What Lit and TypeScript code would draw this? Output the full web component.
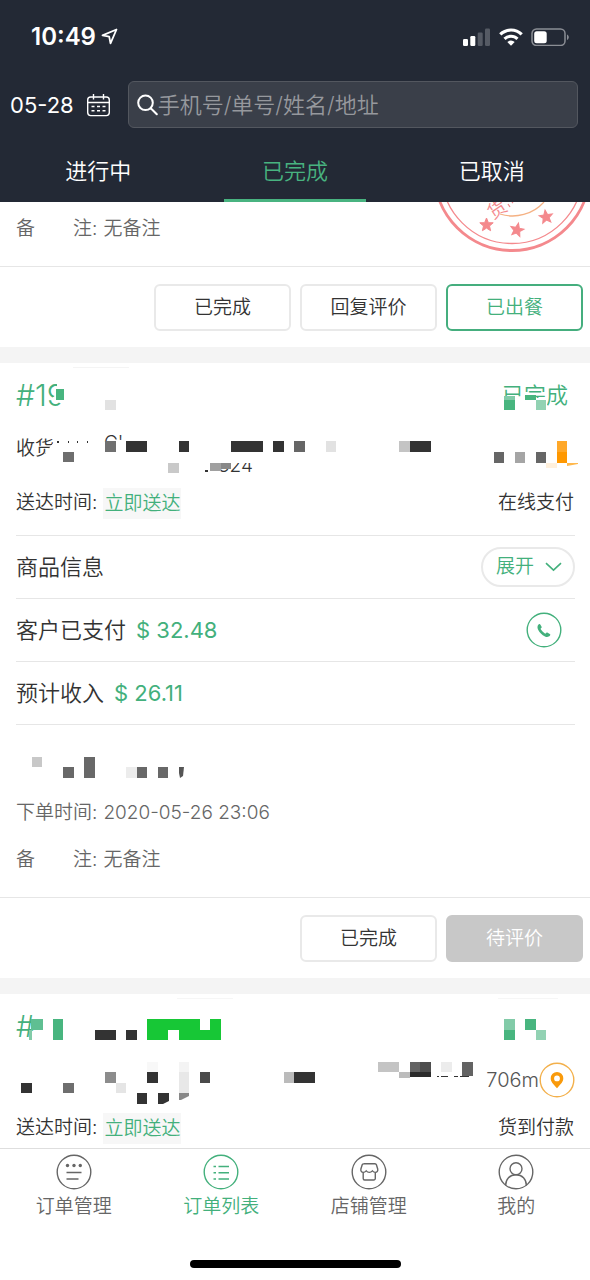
import { LitElement, html, svg, css, nothing, type TemplateResult } from "lit";
import { customElement, state } from "lit/decorators.js";
import { classMap } from "lit/directives/class-map.js";

type Block = [x: number, y: number, w: number, h: number, fill: string];

const blocks = (list: Block[]) =>
  list.map(([x, y, w, h, fill]) => svg`<rect x=${x} y=${y} width=${w} height=${h} fill=${fill} />`);

const INK = "#333333";
const GREEN = "#48b57f";

/* Redaction blocks, in the coordinates of the order card they cover. */
const FIRST_LEFT: Block[] = [
  [73, 4, 56, 1, "#f4f4f4"],
  [56, 26, 8, 11, GREEN],
  [105, 37, 11, 10, "#e2e2e2"],
  [63, 89, 11, 10, "#6e6e6e"],
  [57, 78, 2, 2, INK],
  [68, 78, 1, 2, INK],
  [77, 78, 1, 2, INK],
  [87, 78, 1, 2, INK],
  [105, 78, 11, 11, "#707070"],
  [126, 78, 21, 11, INK],
  [179, 78, 10, 11, INK],
  [231, 78, 32, 11, INK],
  [273, 78, 11, 11, INK],
  [294, 78, 11, 11, "#666666"],
  [326, 78, 10, 11, "#e2e2e2"],
  [399, 78, 11, 11, "#c4c4c4"],
  [410, 78, 21, 11, INK],
  [168, 100, 11, 10, "#c9c9c9"],
  [210, 100, 11, 8, "#a0a0a0"],
  [221, 100, 10, 6, "#888888"],
];
const FIRST_RIGHT: Block[] = [
  [4, 33, 11, 4, "#82cba8"],
  [4, 37, 11, 10, GREEN],
  [25, 32, 11, 5, GREEN],
  [36, 37, 10, 10, "#92d2b3"],
  [-6, 89, 10, 11, "#666666"],
  [15, 89, 10, 11, "#a5a5a5"],
  [36, 89, 10, 11, "#666666"],
  [46, 100, 11, 5, "#fff0dc"],
  [57, 78, 10, 11, "#ffa829"],
  [57, 89, 10, 11, "#ff9800"],
];
const SENDER: Block[] = [
  [32, 0, 10, 10, "#c8c8c8"],
  [63, 10, 11, 11, "#686868"],
  [84, 0, 11, 21, "#686868"],
  [126, 10, 11, 11, "#ececec"],
  [137, 10, 10, 11, "#686868"],
  [158, 10, 10, 11, "#686868"],
];
const SECOND_LEFT: Block[] = [
  [177, 4, 56, 1, "#f6f6f6"],
  [31, 25, 12, 11, "#5fbf92"],
  [29, 36, 3, 10, "#82cba8"],
  [53, 25, 10, 21, GREEN],
  [95, 36, 21, 10, INK],
  [126, 36, 11, 10, INK],
  [21, 89, 11, 10, INK],
  [63, 89, 11, 10, "#6e6e6e"],
  [105, 78, 11, 11, "#8c8c8c"],
  [116, 89, 10, 10, "#e5e5e5"],
  [147, 68, 11, 10, "#f8f8f8"],
  [147, 78, 11, 11, INK],
  [137, 99, 10, 11, INK],
  [179, 68, 10, 10, "#f4f4f4"],
  [179, 78, 10, 21, "#e8e8e8"],
  [200, 78, 10, 11, "#4a4a4a"],
  [284, 78, 10, 11, "#bbbbbb"],
  [294, 78, 21, 11, INK],
  [378, 68, 21, 10, "#c4c4c4"],
  [399, 78, 11, 6, "#bcbcbc"],
  [410, 68, 10, 10, "#636363"],
  [420, 68, 11, 10, "#4d4d4d"],
  [410, 78, 21, 5, "#2b2b2b"],
  [437, 82, 2, 1, INK],
  [441, 82, 7, 1, INK],
  [454, 82, 4, 1, INK],
  [460, 82, 9, 1, INK],
  [441, 68, 11, 10, "#ececec"],
  [462, 68, 11, 14, "#636363"],
];
const SECOND_RIGHT: Block[] = [
  [-2, 4, 60, 1, "#f6f6f6"],
  [4, 25, 11, 11, "#82cba8"],
  [4, 36, 11, 10, GREEN],
  [25, 25, 11, 11, GREEN],
  [36, 36, 10, 10, "#92d2b3"],
];

const star = (x: number, y: number, turn: number) => svg`
  <polygon transform="translate(${x} ${y}) rotate(${turn})" fill="#f4898d"
    points="0,-7 1.9,-2.3 6.7,-2.2 3,1 4.1,5.7 0,3.1 -4.1,5.7 -3,1 -6.7,-2.2 -1.9,-2.3" />`;

const navIcons: Record<string, TemplateResult> = {
  manage: svg`
    <g fill="currentColor" stroke="none">
      <circle cx="11.5" cy="11.5" r="1.7" /><circle cx="18" cy="11.5" r="1.7" /><circle cx="24.3" cy="11.5" r="1.7" />
    </g>
    <path d="M10.500 18.500h15M10.500 25h12" />`,
  list: svg`
    <path d="M10.500 12.500h2.500M15.500 12.500h10.500M10.500 18.800h2.500M15.500 18.800h10.500M10.500 25h2.500M15.500 25h10.500" />`,
  shop: svg`
    <path d="M12.500 9.800h11.500a1.500 1.500 0 0 1 1.400 1l1.300 4.200c.4 2-.6 3.400-2.300 3.400-1.200 0-2.200-.6-3-1.500-.8.900-1.900 1.500-3.100 1.500s-2.300-.6-3.100-1.500c-.8.9-1.800 1.500-3 1.500-1.700 0-2.700-1.400-2.300-3.400l1.300-4.200a1.500 1.500 0 0 1 1.400-1z" />
    <path d="M12.200 18.400v6.100a1.500 1.500 0 0 0 1.500 1.500h9.100a1.500 1.500 0 0 0 1.500-1.500v-6.100" />`,
  me: svg`
    <circle cx="18" cy="14.800" r="6" />
    <path d="M7.600 31.500c0-6.500 4.200-10.700 10.400-10.700s10.400 4.200 10.400 10.700" />`,
};

@customElement("order-card")
class OrderCard extends LitElement {
  static styles = css`
    :host {
      display: block;
      position: relative;
      background: #fff;
      border-bottom: 16px solid #f4f4f4;
    }
  `;

  render() {
    return html`<slot></slot>`;
  }
}

@customElement("app-root")
class AppRoot extends LitElement {
  @state() private tab = "已完成";
  @state() private page = "list";

  static styles = css`
    :host {
      display: flex;
      flex-direction: column;
      height: 100vh;
      overflow: hidden;
      background: #fff;
      color: #333;
      font-family: Inter, "Noto Sans CJK SC", sans-serif;
      font-size: 19px;
      font-weight: 350;
      line-height: 28px;
    }
    * {
      box-sizing: border-box;
    }
    button,
    input {
      font: inherit;
      color: inherit;
      margin: 0;
      padding: 0;
      border: 0;
      background: none;
    }
    svg {
      display: block;
      flex: none;
    }
    .top {
      flex: none;
      background: #232935;
      color: #fff;
    }
    .status-bar {
      display: flex;
      align-items: center;
      justify-content: space-between;
      height: 73px;
      padding: 0 20px 0 31px;
    }
    .clock {
      display: flex;
      align-items: center;
      gap: 5px;
      font-size: 24px;
      font-weight: 600;
    }
    .signals {
      display: flex;
      align-items: center;
      gap: 8px;
    }
    .search-row {
      display: flex;
      align-items: center;
      gap: 17px;
      padding: 8px 12px 12px 10px;
      font-size: 22px;
    }
    .date {
      display: flex;
      align-items: center;
      gap: 12px;
      font-weight: 400;
    }
    .search {
      display: flex;
      align-items: center;
      flex: 1;
      min-width: 0;
      height: 47px;
      padding: 0 8px;
      border: 1px solid #53575f;
      border-radius: 6px;
      background: #3a3f49;
    }
    .search input {
      flex: 1;
      min-width: 0;
      height: 40px;
      outline: 0;
    }
    .search input::placeholder {
      color: #96989d;
      opacity: 1;
    }
    .tabs {
      display: grid;
      grid-template-columns: repeat(3, 1fr);
      font-size: 22px;
    }
    .tab {
      display: flex;
      flex-direction: column;
      align-items: center;
      height: 62px;
      line-height: 62px;
    }
    .tab::after {
      content: "";
      width: 72%;
      height: 3px;
      margin-top: -3px;
    }
    .tab.on {
      color: #48b380;
    }
    .tab.on::after {
      background: #48b380;
    }
    .orders {
      flex: 1;
      min-height: 0;
      overflow: hidden auto;
      scrollbar-width: none;
    }
    .over {
      position: absolute;
      top: 0;
      pointer-events: none;
      overflow: visible;
    }
    .over.left {
      left: 0;
    }
    .over.right {
      right: 0;
    }
    .title,
    .person,
    .when,
    .line {
      display: flex;
      align-items: center;
      justify-content: space-between;
    }
    .title {
      height: 64px;
      padding: 0 22px 0 16px;
      color: #43b07c;
      font-size: 22px;
    }
    .number {
      font-size: 30px;
    }
    .person {
      height: 44px;
      margin-bottom: 16px;
      padding: 0 15px 0 16px;
    }
    .person.near {
      justify-content: flex-end;
      margin-bottom: 10px;
    }
    .distance {
      font-size: 20px;
      color: #555;
    }
    .when {
      height: 48px;
      padding: 0 16px 16px;
    }
    .field {
      display: flex;
      align-items: center;
      gap: 6px;
      white-space: pre;
    }
    .soon {
      display: block;
      padding: 0 1px;
      line-height: 31px;
      background: #f7f7f7;
      color: #43b07c;
    }
    .lines {
      margin: 0 15px 0 16px;
    }
    .line {
      height: 63px;
      border-top: 1px solid #e6e6e6;
      font-size: 22px;
    }
    .line:last-child {
      height: 64px;
      border-bottom: 1px solid #e6e6e6;
    }
    .amount {
      display: flex;
      align-items: baseline;
      gap: 10px;
    }
    .price {
      color: #43b07c;
      font-weight: 400;
    }
    .expand {
      display: flex;
      align-items: center;
      gap: 11px;
      height: 40px;
      padding: 0 11px 0 13px;
      border: 2px solid #e9e9e9;
      border-radius: 20px;
      color: #43b07c;
      font-size: 19px;
    }
    .call {
      margin-right: 13px;
      color: #43b07c;
    }
    .details {
      padding: 17px 16px 14px;
      color: #666;
      line-height: 47px;
    }
    .details.tail {
      padding-top: 3px;
    }
    .sender {
      height: 47px;
      margin-left: -16px;
      padding-top: 15px;
    }
    .actions {
      display: flex;
      justify-content: flex-end;
      gap: 9px;
      padding: 17px 7px 16px;
      border-top: 1px solid #e6e6e6;
    }
    .action {
      width: 137px;
      height: 47px;
      border: 2px solid #e9e9e9;
      border-radius: 6px;
    }
    .action.primary {
      border-color: #45ae7e;
      color: #43b07c;
    }
    .action.idle {
      border-color: #c8c8c8;
      background: #c8c8c8;
      color: #fff;
    }
    .bottom {
      flex: none;
      background: #fff;
      border-top: 1px solid #dedede;
    }
    .nav {
      display: grid;
      grid-template-columns: repeat(4, 1fr);
      padding-top: 5px;
    }
    .nav a {
      display: flex;
      flex-direction: column;
      align-items: center;
      color: #666;
      line-height: 34px;
      text-decoration: none;
    }
    .nav a.on {
      color: #43b07c;
    }
    .home {
      width: 211px;
      height: 8px;
      margin: 36px auto 12px;
      border-radius: 4px;
      background: #000;
    }
  `;

  private field(label: string, value: string | TemplateResult) {
    return html`<div class="field"><span>${label}:</span><span>${value}</span></div>`;
  }

  private header() {
    return html`
      <header class="top">
        <div class="status-bar">
          <div class="clock">
            <span>10:49</span>
            <svg width="17" height="17" viewBox="0 0 17 17" fill="none" stroke="#fff" stroke-width="1.8" stroke-linejoin="round">
              <path d="M15.500 1.500 1.500 7.300l6.700 1.300 1.300 6.700z" />
            </svg>
          </div>
          <div class="signals">
            <svg width="28" height="18" viewBox="0 0 28 18">
              <rect x="0" y="11" width="5" height="7" rx="1.2" fill="#fff" />
              <rect x="7.300" y="8" width="5" height="10" rx="1.2" fill="#fff" />
              <rect x="14.700" y="4.500" width="5" height="13.500" rx="1.2" fill="#555a64" />
              <rect x="22" y="0.500" width="5" height="17.500" rx="1.2" fill="#555a64" />
            </svg>
            <svg width="24" height="18" viewBox="0 0 24 18" fill="none" stroke="#fff" stroke-width="3.2">
              <path d="M1.300 6.400a15.200 15.200 0 0 1 21.400 0" />
              <path d="M5.500 10.900a9.200 9.200 0 0 1 13 0" stroke-width="3" />
              <path d="M12 17.800 8.300 14.100a5.200 5.200 0 0 1 7.400 0z" fill="#fff" stroke="none" />
            </svg>
            <svg width="39" height="18" viewBox="0 0 39 18">
              <rect x="1" y="1" width="33" height="16.500" rx="4.500" fill="none" stroke="#8b8e95" stroke-width="1.5" />
              <rect x="3.200" y="3.200" width="12.500" height="12" rx="2.500" fill="#fff" />
              <path d="M36 6.500c2.400 1 2.400 4.500 0 5.500z" fill="#8b8e95" />
            </svg>
          </div>
        </div>
        <div class="search-row">
          <button class="date">
            05-28
            <svg width="25" height="24" viewBox="0 0 25 24" fill="none" stroke="#fff" stroke-width="1.4">
              <rect x="1.700" y="4" width="21.600" height="18.600" rx="3" />
              <path d="M1.700 9.500h21.600M7.500 1v5.500M17.500 1v5.500" />
              <path d="M5.500 13.500h3M11 13.500h3M16.500 13.500h3M5.500 17.800h3M11 17.800h3M16.500 17.800h3" stroke-width="1.6" />
            </svg>
          </button>
          <label class="search">
            <svg width="21" height="22" viewBox="0 0 21 22" fill="none" stroke="#fff" stroke-width="2" stroke-linecap="round">
              <circle cx="8.500" cy="8.800" r="7.300" />
              <path d="m14 14.500 5.800 5.800" />
            </svg>
            <input type="search" aria-label="搜索" placeholder="手机号/单号/姓名/地址" />
          </label>
        </div>
        <div class="tabs">
          ${["进行中", "已完成", "已取消"].map(
            (name) => html`<button class=${classMap({ tab: true, on: name === this.tab })}
              @click=${() => (this.tab = name)}>${name}</button>`
          )}
        </div>
      </header>`;
  }

  private previousOrder() {
    return html`
      <order-card>
        <div class="details tail">${this.field("备\u3000\u3000注", "无备注")}</div>
        <svg class="over right" width="160" height="52" viewBox="0 0 160 52" fill="none" stroke="#f4898d">
          <circle cx="82" cy="-29" r="77.500" stroke-width="3" />
          <circle cx="82" cy="-29" r="70.500" stroke-width="1.3" />
          <path d="M70 12a42 42 0 0 0 44 -12" stroke="#f5b183" stroke-width="1.3" />
          <path d="m78 2 2 3M82 0l1 1" stroke-width="1.3" />
          ${star(56.5, 23, 0)}${star(87, 28, 12)}${star(116, 15, -8)}
          <text transform="translate(63 18) rotate(-34)" font-size="19" fill="#f4898d" stroke="none">货</text>
        </svg>
        <div class="actions">
          <button class="action">已完成</button>
          <button class="action">回复评价</button>
          <button class="action primary">已出餐</button>
        </div>
      </order-card>`;
  }

  private firstOrder() {
    return html`
      <order-card>
        <div class="title"><span class="number">#19</span><span>已完成</span></div>
        <div class="person"><span>收货</span></div>
        <svg class="over left" width="480" height="124" viewBox="0 0 480 124">
          <polygon points="57,14 74,14 74,48 62,41 51,36 57,31" fill="#fff" />
          <polygon points="55,78 55,100 43,100 45,91 50,84" fill="#fff" />
          <text x="104" y="86" font-size="19" fill=${INK}>C'</text>
          <rect x="104" y="79" width="30" height="12" fill="#fff" />
          <text x="218" y="109" font-size="19" fill=${INK}>324</text>
          <rect x="216" y="90" width="40" height="10" fill="#fff" />
          <rect x="205" y="107" width="3" height="2" fill=${INK} />
          ${blocks(FIRST_LEFT)}
        </svg>
        <svg class="over right" width="90" height="124" viewBox="0 0 90 124">
          <rect x="0" y="35" width="47" height="12" fill="#fff" />
          ${blocks(FIRST_RIGHT)}
          <path d="M67 100h11v1l-11 2z" fill="#ffb84d" />
        </svg>
        <div class="when">
          ${this.field("送达时间", html`<span class="soon">立即送达</span>`)}
          <span>在线支付</span>
        </div>
        <div class="lines">
          <div class="line">
            <span>商品信息</span>
            <button class="expand">
              展开
              <svg width="17" height="10" viewBox="0 0 17 10" fill="none" stroke="currentColor" stroke-width="1.6">
                <path d="m1 1.200 7.500 7 7.500-7" />
              </svg>
            </button>
          </div>
          <div class="line">
            <span class="amount">客户已支付 <span class="price">$ 32.48</span></span>
            <button class="call" aria-label="拨打电话">
              <svg width="36" height="36" viewBox="0 0 36 36">
                <circle cx="18" cy="18" r="16.800" fill="none" stroke="currentColor" stroke-width="1.4" />
                <path fill="currentColor" d="M12.800 12.300c.6-.5 1.200-.4 1.500.2l1.300 2.200c.3.600.1 1-.4 1.300-.6.500-.7.900-.3 1.600 1 1.500 2.200 2.800 3.700 3.700.700.500 1.200.400 1.600-.2.400-.6.900-.6 1.500-.3l2.100 1.300c.6.400.7.900.2 1.500-1.300 1.600-3.200 1.800-5 .900-3.100-1.500-5.500-3.900-7-7-.9-1.900-.7-3.900.8-5.200z" />
              </svg>
            </button>
          </div>
          <div class="line">
            <span class="amount">预计收入 <span class="price">$ 26.11</span></span>
          </div>
        </div>
        <div class="details">
          <div class="sender">
            <svg width="200" height="21" viewBox="0 0 200 21">
              ${blocks(SENDER)}
              <path d="M179 10h5l-1 9-3 2-1-5z" fill="#555" />
            </svg>
          </div>
          ${this.field("下单时间", "2020-05-26 23:06")}
          ${this.field("备\u3000\u3000注", "无备注")}
        </div>
        <div class="actions">
          <button class="action">已完成</button>
          <button class="action idle">待评价</button>
        </div>
      </order-card>`;
  }

  private secondOrder() {
    return html`
      <order-card>
        <div class="title"><span class="number">#</span></div>
        <div class="person near">
          <span class="distance">706m</span>
          <svg width="36" height="36" viewBox="0 0 36 36">
            <circle cx="18" cy="18" r="16.800" fill="none" stroke="#f3b04b" stroke-width="1.4" />
            <path fill="#f99a0b" fill-rule="evenodd" d="M18 10a6.300 6.300 0 0 1 6.300 6.300c0 3.600-2.300 5.500-6.300 10-4-4.500-6.300-6.400-6.300-10A6.300 6.300 0 0 1 18 10zm0 3.500a2.900 2.900 0 1 0 0 5.800 2.900 2.900 0 0 0 0-5.800z" />
          </svg>
        </div>
        <svg class="over left" width="480" height="124" viewBox="0 0 480 124">
          ${blocks(SECOND_LEFT)}
          <path d="M147 25h53v11h10v-11h11v21h-42v-10h-11v10h-21z" fill="#17c736" />
          <path d="M158 99h11v8l-6 3h-5z" fill=${INK} />
          <path d="M179 99h10v3l-8 4h-2z" fill="#888" />
        </svg>
        <svg class="over right" width="90" height="124" viewBox="0 0 90 124">${blocks(SECOND_RIGHT)}</svg>
        <div class="when">
          ${this.field("送达时间", html`<span class="soon">立即送达</span>`)}
          <span>货到付款</span>
        </div>
      </order-card>`;
  }

  render() {
    const pages = [
      ["manage", "订单管理"],
      ["list", "订单列表"],
      ["shop", "店铺管理"],
      ["me", "我的"],
    ];
    return html`
      ${this.header()}
      <main class="orders">${this.previousOrder()}${this.firstOrder()}${this.secondOrder()}</main>
      <footer class="bottom">
        <nav class="nav">
          ${pages.map(
            ([id, name]) => html`<a href="#${id}" class=${classMap({ on: id === this.page })}
              aria-current=${id === this.page ? "page" : nothing} @click=${() => (this.page = id)}>
              <svg width="36" height="36" viewBox="0 0 36 36" fill="none" stroke="currentColor" stroke-width="1.4">
                <circle cx="18" cy="18" r="16.800" />${navIcons[id]}
              </svg>
              ${name}
            </a>`
          )}
        </nav>
        <div class="home"></div>
      </footer>`;
  }
}
